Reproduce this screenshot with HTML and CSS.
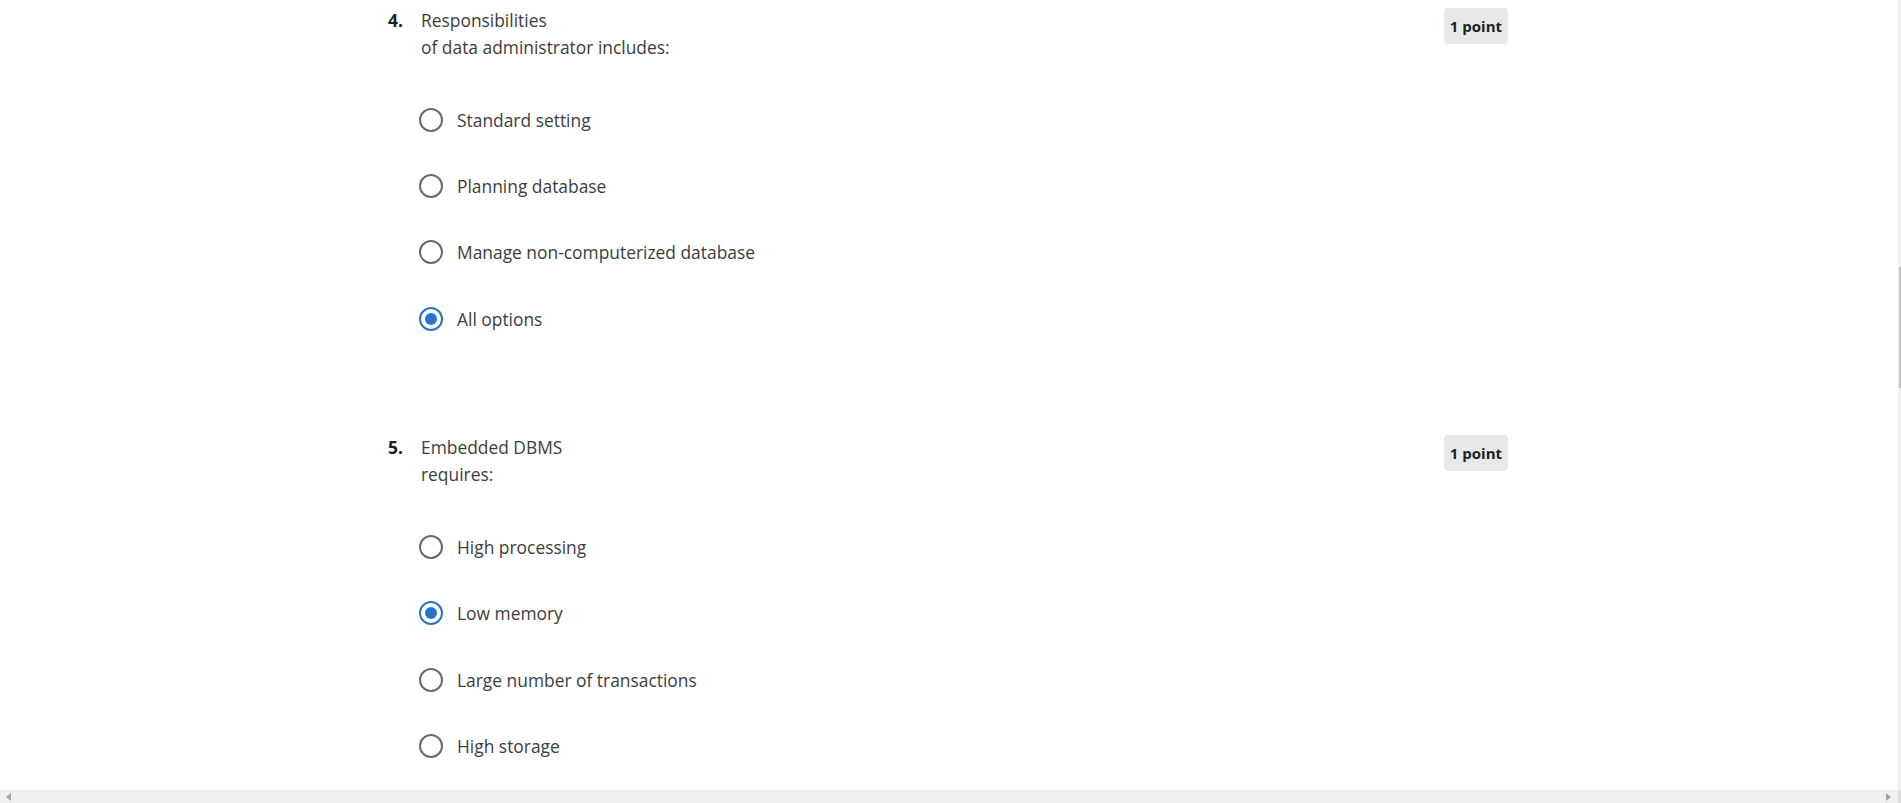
FILE: index.html
```html
<!DOCTYPE html>
<html lang="en">
<head>
<meta charset="utf-8">
<title>Quiz</title>
<link rel="stylesheet" href="styles.css">
</head>
<body>
<div class="frame">
  <main class="page">
    <div class="content">
      <section class="question">
        <div class="qnum">4.</div>
        <div class="qbody">
          <div class="qtitle">Responsibilities<br>of data administrator includes:</div>
          <ul class="options">
            <li class="option"><span class="radio"></span><span class="label">Standard setting</span></li>
            <li class="option"><span class="radio"></span><span class="label">Planning database</span></li>
            <li class="option"><span class="radio"></span><span class="label">Manage non-computerized database</span></li>
            <li class="option"><span class="radio checked"></span><span class="label">All options</span></li>
          </ul>
        </div>
        <div class="badge">1 point</div>
      </section>
      <section class="question">
        <div class="qnum">5.</div>
        <div class="qbody">
          <div class="qtitle">Embedded DBMS<br>requires:</div>
          <ul class="options">
            <li class="option"><span class="radio"></span><span class="label">High processing</span></li>
            <li class="option"><span class="radio checked"></span><span class="label">Low memory</span></li>
            <li class="option"><span class="radio"></span><span class="label">Large number of transactions</span></li>
            <li class="option"><span class="radio"></span><span class="label">High storage</span></li>
          </ul>
        </div>
        <div class="badge">1 point</div>
      </section>
    </div>
  </main>
  <div class="vscroll"><div class="vthumb"></div></div>
  <div class="hscroll">
    <span class="arrow left"></span>
    <span class="arrow right"></span>
    <span class="corner"></span>
  </div>
</div>
</body>
</html>
```

FILE: styles.css
```css
* { box-sizing: border-box; }
html, body { margin: 0; padding: 0; background: #fff; }
body {
  font-family: "Open Sans", "Liberation Sans", sans-serif;
  color: #3b3d3f;
  font-size: 17.4px;
}
.frame {
  display: grid;
  grid-template-columns: 1fr 3px;
  grid-template-rows: 790px 13px;
  width: 1901px;
  height: 803px;
  overflow: hidden;
}
.page { overflow: hidden; }
.content {
  width: 1120px;
  margin-left: 388px;
  padding-top: 7px;
  display: flex;
  flex-direction: column;
  gap: 82px;
}
.question {
  display: flex;
  align-items: flex-start;
}
.qnum {
  width: 33px;
  flex: none;
  font-weight: 700;
  color: #1f1f1f;
  line-height: 27px;
}
.qbody { flex: 1; }
.qtitle { line-height: 27px; }
.options {
  list-style: none;
  margin: 25.5px 0 0 -2px;
  padding: 0;
}
.option {
  height: 66.4px;
  display: flex;
  align-items: center;
  gap: 14px;
}
.radio {
  width: 24px;
  height: 24px;
  border: 2px solid #6a6a6a;
  border-radius: 50%;
  flex: none;
  display: flex;
  align-items: center;
  justify-content: center;
}
.radio.checked { border-color: #2a73cc; }
.radio.checked::after {
  content: "";
  width: 12px;
  height: 12px;
  border-radius: 50%;
  background: #2a73cc;
}
.label { line-height: 24px; }
.badge {
  flex: none;
  margin-top: 1px;
  height: 36px;
  padding: 0 6px;
  display: flex;
  align-items: center;
  background: #e8e8e8;
  border-radius: 4px;
  font-size: 15px;
  font-weight: 700;
  color: #1f1f1f;
}
.vscroll {
  background: #f1f1f1;
  padding-top: 267px;
  display: flex;
  justify-content: center;
}
.vthumb {
  width: 2px;
  height: 121px;
  background: #c4c4c4;
}
.hscroll {
  grid-column: 1 / 3;
  background: #f0f0f0;
  display: flex;
  align-items: center;
  justify-content: space-between;
  padding-left: 6px;
}
.arrow {
  width: 0;
  height: 0;
  border-top: 4px solid transparent;
  border-bottom: 4px solid transparent;
}
.arrow.left { border-right: 5px solid #a3a3a3; }
.arrow.right { border-left: 5px solid #a3a3a3; margin-left: auto; margin-right: 7px; }
.corner { width: 3px; height: 13px; background: #dcdcdc; }
```
